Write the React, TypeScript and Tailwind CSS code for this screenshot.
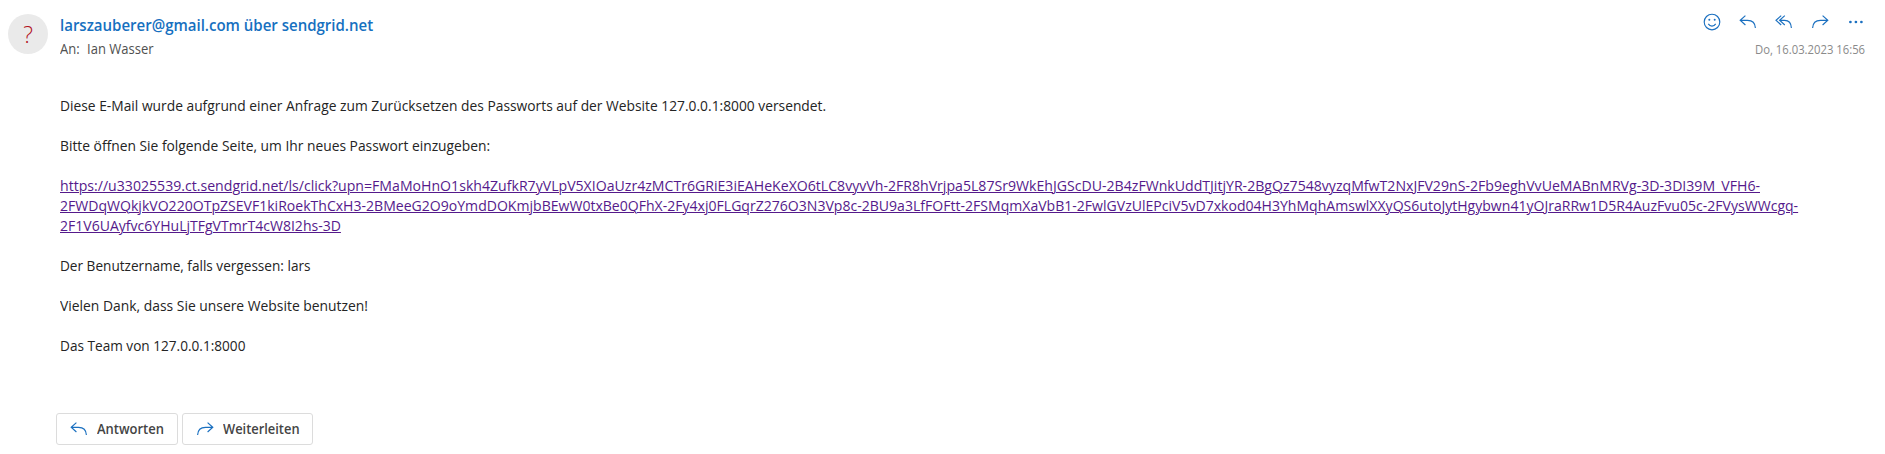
import type { ReactNode } from 'react';

function Icon({ children }: { children: ReactNode }) {
  return (
    <svg
      width="18"
      height="18"
      viewBox="0 0 18 18"
      fill="none"
      stroke="#1b70c0"
      strokeWidth="1.15"
      className="block shrink-0"
    >
      {children}
    </svg>
  );
}

function ReplyIcon() {
  return (
    <Icon>
      <path d="M6.4 2.6 1.2 7.3l5.2 4.7M1.2 7.3h7.3c4.6 0 7.7 2.9 7.9 7.7" />
    </Icon>
  );
}

function ReplyAllIcon() {
  return (
    <Icon>
      <path d="M6.2 2.6 1 7.3 6.2 12M9.8 2.6 4.6 7.3 9.8 12M4.6 7.3h5c4 0 6.6 2.9 6.8 7.7" />
    </Icon>
  );
}

function ForwardIcon() {
  return (
    <Icon>
      <path d="M11.6 2.6l5.2 4.7-5.2 4.7M16.8 7.3H9.5c-4.6 0-7.7 2.9-7.9 7.7" />
    </Icon>
  );
}

function SmileyIcon() {
  return (
    <Icon>
      <circle cx="9" cy="9" r="7.8" />
      <path d="M5.3 10.9c.9 1.5 2.2 2.2 3.7 2.2s2.8-.7 3.7-2.2" />
      <circle cx="6.3" cy="6.8" r="1" fill="#1b70c0" stroke="none" />
      <circle cx="11.7" cy="6.8" r="1" fill="#1b70c0" stroke="none" />
    </Icon>
  );
}

function MoreIcon() {
  return (
    <Icon>
      <g fill="#1b70c0" stroke="none">
        <circle cx="3.4" cy="9" r="1.35" />
        <circle cx="8.9" cy="9" r="1.35" />
        <circle cx="14.4" cy="9" r="1.35" />
      </g>
    </Icon>
  );
}

export default function App() {
  return (
    <div className="flex h-[454px] w-full flex-col overflow-hidden bg-white font-['Open_Sans','Noto_Sans',sans-serif] text-[#242424]">
      <header className="flex h-[95px] shrink-0 pl-2">
        <div className="mt-[14px] flex size-10 shrink-0 items-center justify-center rounded-full bg-[#eaeaea] text-[23px] font-light leading-none text-[#b3131f]">
          ?
        </div>
        <div className="ml-3 mt-[14px] flex flex-col whitespace-nowrap">
          <h1 className="origin-left scale-x-[0.938] text-[16px] font-semibold leading-[22px] text-[#1670c0]">
            larszauberer@gmail.com über sendgrid.net
          </h1>
          <div className="mt-[3px] flex origin-left scale-x-[0.93] gap-2 text-[14px] leading-5 text-[#505050]">
            <span>An:</span>
            <span>Ian Wasser</span>
          </div>
        </div>
        <div className="ml-auto flex flex-col items-end pr-5 pt-[13px]">
          <div className="flex gap-[18px]">
            <SmileyIcon />
            <ReplyIcon />
            <ReplyAllIcon />
            <ForwardIcon />
            <MoreIcon />
          </div>
          <time className="mt-[10px] origin-right scale-x-[0.94] whitespace-nowrap text-[12px] leading-[18px] text-[#8a8a8a]">
            Do, 16.03.2023 16:56
          </time>
        </div>
      </header>

      <main className="flex flex-col items-start gap-5 whitespace-nowrap pl-[60px] text-[15px] leading-5">
        <p className="origin-left scale-x-[0.92]">
          Diese E-Mail wurde aufgrund einer Anfrage zum Zurücksetzen des Passworts auf der Website 127.0.0.1:8000
          versendet.
        </p>
        <p className="origin-left scale-x-[0.921]">
          Bitte öffnen Sie folgende Seite, um Ihr neues Passwort einzugeben:
        </p>
        <a href="#" className="flex flex-col items-start text-[#551a8b] underline decoration-1 underline-offset-1">
          <span className="origin-left scale-x-[0.9404]">
            https://u33025539.ct.sendgrid.net/ls/click?upn=FMaMoHnO1skh4ZufkR7yVLpV5XIOaUzr4zMCTr6GRiE3iEAHeKeXO6tLC8vyvVh-2FR8hVrjpa5L87Sr9WkEhJGScDU-2B4zFWnkUddTJitjYR-2BgQz7548vyzqMfwT2NxJFV29nS-2Fb9eghVvUeMABnMRVg-3D-3DI39M_VFH6-
          </span>
          <span className="origin-left scale-x-[0.937]">
            2FWDqWQkjkVO220OTpZSEVF1kiRoekThCxH3-2BMeeG2O9oYmdDOKmjbBEwW0txBe0QFhX-2Fy4xj0FLGqrZ276O3N3Vp8c-2BU9a3LfFOFtt-2FSMqmXaVbB1-2FwlGVzUlEPciV5vD7xkod04H3YhMqhAmswlXXyQS6utoJytHgybwn41yOJraRRw1D5R4AuzFvu05c-2FVysWWcgq-
          </span>
          <span className="origin-left scale-x-[0.936]">2F1V6UAyfvc6YHuLjTFgVTmrT4cW8I2hs-3D</span>
        </a>
        <p className="origin-left scale-x-[0.907]">Der Benutzername, falls vergessen: lars</p>
        <p className="origin-left scale-x-[0.925]">Vielen Dank, dass Sie unsere Website benutzen!</p>
        <p className="origin-left scale-x-[0.908]">Das Team von 127.0.0.1:8000</p>
      </main>

      <footer className="mt-[58px] flex gap-1 pl-14 text-[14px] font-semibold leading-5 text-[#444]">
        <button className="flex h-8 w-[122px] items-center gap-[9px] rounded-[3px] border border-[#dcdcdc] pl-[13px]">
          <ReplyIcon />
          <span className="origin-left scale-x-[0.928]">Antworten</span>
        </button>
        <button className="flex h-8 w-[131px] items-center gap-[9px] rounded-[3px] border border-[#dcdcdc] pl-[13px]">
          <ForwardIcon />
          <span className="origin-left scale-x-[0.92]">Weiterleiten</span>
        </button>
      </footer>
    </div>
  );
}
